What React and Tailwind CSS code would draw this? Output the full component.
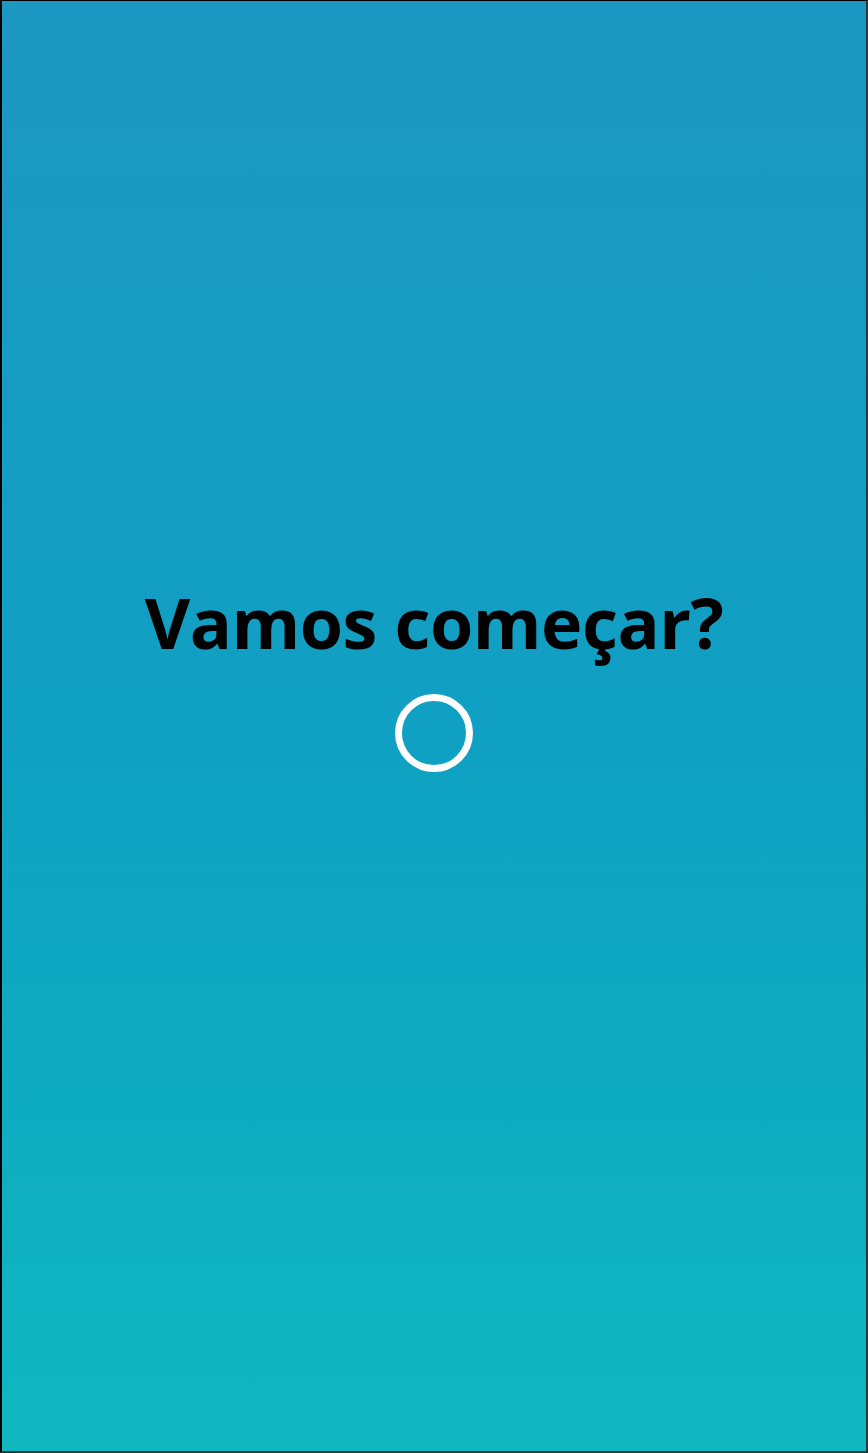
export default function App() {
  return (
    <div className="w-[868px] h-[1453px] border-l-2 border-t border-r-2 border-b-2 border-l-black border-t-black border-r-[#333] border-b-[#333] bg-gradient-to-b from-[#1c97c2] via-[#0fa0c3] to-[#0fb7bf] flex flex-col items-center justify-center pb-[94px]">
      <h1
        className="text-[70px] font-bold leading-none text-black tracking-[-0.5px]"
        style={{ fontFamily: '"Open Sans", "Noto Sans", sans-serif' }}
      >
        Vamos começar?
      </h1>
      <div className="mt-[37px] w-[78px] h-[78px] rounded-full border-[7px] border-white" />
    </div>
  );
}
